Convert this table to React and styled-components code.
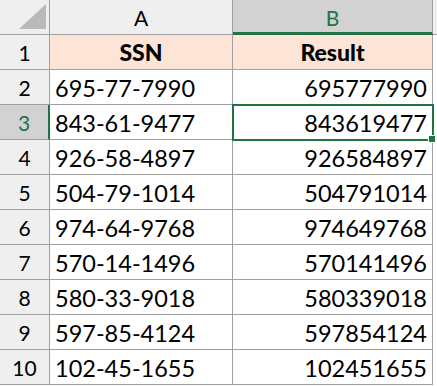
import styled, { createGlobalStyle } from "styled-components";

const GlobalStyle = createGlobalStyle`
  html, body {
    margin: 0;
    padding: 0;
    background: #ffffff;
  }
  body {
    font-family: Lato, "Open Sans", sans-serif;
  }
`;

const rows = [
  ["695-77-7990", "695777990"],
  ["843-61-9477", "843619477"],
  ["926-58-4897", "926584897"],
  ["504-79-1014", "504791014"],
  ["974-64-9768", "974649768"],
  ["570-14-1496", "570141496"],
  ["580-33-9018", "580339018"],
  ["597-85-4124", "597854124"],
  ["102-45-1655", "102451655"],
];

function App() {
  return (
    <>
      <GlobalStyle />
      <Sheet>
        <Corner>
          <svg width="28" height="26" viewBox="0 0 28 26">
            <polygon points="27,0 27,25 0,25" fill="#b9b9b9" />
          </svg>
        </Corner>
        <ColHead>A</ColHead>
        <ColHead $active>B</ColHead>
        <Spare $head />

        <RowHead>1</RowHead>
        <TitleCell>SSN</TitleCell>
        <TitleCell>Result</TitleCell>
        <Spare />

        {rows.map((r, i) => {
          const n = i + 2;
          const active = n === 3;
          return [
            <RowHead key={"h" + n} $active={active}>{n}</RowHead>,
            <Cell key={"a" + n}>{r[0]}</Cell>,
            <Cell key={"b" + n} $right $selected={active}>
              {r[1]}
              {active && <Handle />}
            </Cell>,
            <Spare key={"s" + n} />,
          ];
        })}
      </Sheet>
    </>
  );
}

export default App;

const Sheet = styled.div`
  display: grid;
  grid-template-columns: 50px 183px 200px 4px;
  grid-template-rows: 35px repeat(10, 35px);
  width: 437px;
  height: 386px;
  overflow: hidden;
  color: #000;
`;

const Corner = styled.div`
  background: #efefef;
  border-right: 1px solid #a0a0a0;
  border-bottom: 1px solid #a0a0a0;
  display: flex;
  align-items: flex-end;
  justify-content: flex-end;
  padding: 0 2px 4px 0;
`;

const ColHead = styled.div`
  background: ${(p) => (p.$active ? "#d2d2d2" : "#efefef")};
  color: ${(p) => (p.$active ? "#217346" : "#000")};
  border-right: 1px solid #a0a0a0;
  border-bottom: ${(p) => (p.$active ? "3px solid #217346" : "1px solid #a0a0a0")};
  display: flex;
  align-items: center;
  justify-content: center;
  font-size: 21px;
  padding-top: ${(p) => (p.$active ? "2px" : "0")};
`;

const RowHead = styled.div`
  background: ${(p) => (p.$active ? "#d2d2d2" : "#efefef")};
  color: ${(p) => (p.$active ? "#217346" : "#000")};
  border-right: ${(p) => (p.$active ? "2px solid #217346" : "1px solid #a0a0a0")};
  border-bottom: 1px solid #a0a0a0;
  display: flex;
  align-items: center;
  justify-content: center;
  font-size: 21px;
`;

const TitleCell = styled.div`
  background: #fce4d6;
  border-right: 1px solid #a0a0a0;
  border-bottom: 1px solid #a0a0a0;
  display: flex;
  align-items: center;
  justify-content: center;
  font-size: 23px;
  font-weight: 900;
`;

const Cell = styled.div`
  position: relative;
  border-right: 1px solid #a0a0a0;
  border-bottom: 1px solid #a0a0a0;
  display: flex;
  align-items: center;
  justify-content: ${(p) => (p.$right ? "flex-end" : "flex-start")};
  padding: 1px 5px 0 5px;
  font-size: 23.5px;
  ${(p) =>
    p.$selected &&
    `
    outline: 2px solid #217346;
    outline-offset: -1px;
    z-index: 1;
  `}
`;

const Handle = styled.span`
  position: absolute;
  right: -4px;
  bottom: -4px;
  width: 6px;
  height: 6px;
  background: #217346;
  border: 1px solid #fff;
`;

const Spare = styled.div`
  background: ${(p) => (p.$head ? "#efefef" : "#fff")};
  border-bottom: ${(p) => (p.$head ? "1px solid #a0a0a0" : "none")};
`;
